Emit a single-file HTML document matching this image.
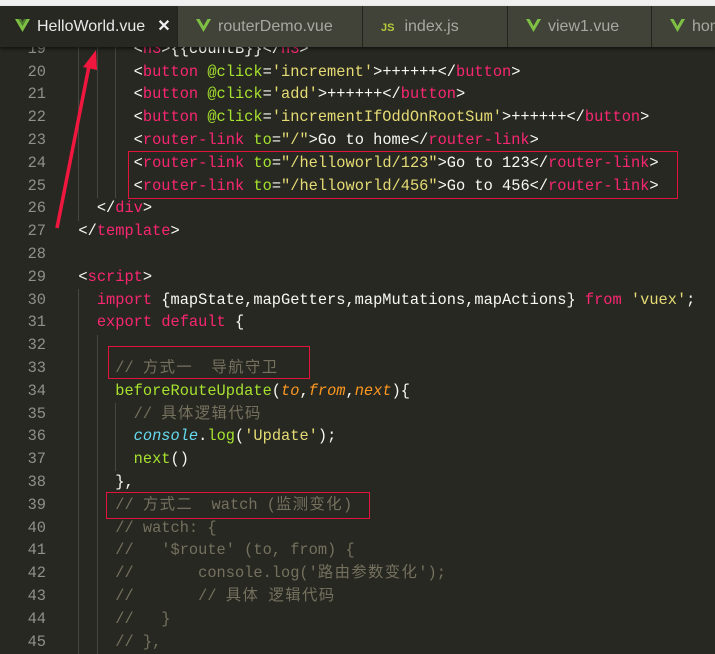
<!DOCTYPE html>
<html><head><meta charset="utf-8"><style>
*{margin:0;padding:0;box-sizing:border-box}
body{width:715px;height:653px;overflow:hidden;background:#272822;position:relative;font-family:"Liberation Mono","Noto Sans CJK SC",monospace;font-size:15.35px;color:#f8f8f2}
.top{position:absolute;left:0;top:0;width:715px;height:6px;background:#f0f0f0}
.tabs{position:absolute;left:0;top:6px;width:715px;height:41px;background:#414339;box-shadow:0 2px 3px rgba(0,0,0,.5);z-index:5}
.tab{position:absolute;top:0;height:41px;border-left:1px solid #23241f;font-family:"Liberation Sans",sans-serif;font-size:16px;color:#a8a8a0;line-height:41px;white-space:nowrap;overflow:hidden}
.tab.act{background:#272822;color:#e8e8e8;border-left:none}
.v{display:inline-block;width:15px;height:13px;vertical-align:-1px;margin-right:7px}
.js{color:#b5c93a;font-weight:bold;font-size:11px;margin-right:10px}
.ln{position:absolute;left:0;width:46px;text-align:right;color:#8f908a;height:22.8px;line-height:22.8px}
.cd{position:absolute;left:60px;white-space:pre;height:22.8px;line-height:22.8px}
.t{color:#f92672}.a{color:#a6e22e}.s{color:#e6db74}.c{color:#75715e}.o{color:#fd971f;font-style:italic}.k{color:#66d9ef;font-style:italic}
.z{letter-spacing:1.4px}
.g{position:absolute;width:1px;background:#464741}
.box{position:absolute;border:1.5px solid #e0143c}
#code{position:absolute;left:0;top:1px;width:715px;height:653px}
</style></head><body>
<div class="top"></div>
<div class="tabs">
<div class="tab act" style="left:0;width:177px;padding-left:15px"><svg class="v" viewBox="0 0 15 13"><path d="M0 0h3.5l4 7 4-7H15L7.5 13z" fill="#7ec043"/><path d="M3.5 0h2.5l1.5 2.6L9 0h2.5L7.5 7z" fill="#4e7d2f"/></svg>HelloWorld.vue<span style="margin-left:12px;color:#f0f0f0;font-weight:bold">✕</span></div>
<div class="tab" style="left:177px;width:185px;padding-left:18px"><svg class="v" viewBox="0 0 15 13"><path d="M0 0h3.5l4 7 4-7H15L7.5 13z" fill="#7ec043"/></svg>routerDemo.vue</div>
<div class="tab" style="left:362px;width:145px;padding-left:18px"><span class="js">JS</span>index.js</div>
<div class="tab" style="left:507px;width:144px;padding-left:18px"><svg class="v" viewBox="0 0 15 13"><path d="M0 0h3.5l4 7 4-7H15L7.5 13z" fill="#7ec043"/></svg>view1.vue</div>
<div class="tab" style="left:651px;width:64px;padding-left:18px"><svg class="v" viewBox="0 0 15 13"><path d="M0 0h3.5l4 7 4-7H15L7.5 13z" fill="#7ec043"/></svg>home</div>
</div>

<div id="code">
<div class="g" style="left:78px;top:37px;height:183px"></div>
<div class="g" style="left:78px;top:288px;height:365px"></div>
<div class="g" style="left:97px;top:37px;height:160px"></div>
<div class="g" style="left:97px;top:334px;height:319px"></div>
<div class="g" style="left:115px;top:37px;height:160px"></div>
<div class="g" style="left:115px;top:402px;height:68px"></div>

<div class="ln" style="top:37px">19</div><div class="cd" style="top:37px">        &lt;<span class="t">h3</span>&gt;{{countB}}&lt;/<span class="t">h3</span>&gt;</div>
<div class="ln" style="top:59.6px">20</div><div class="cd" style="top:59.6px">        &lt;<span class="t">button</span> <span class="a">@click</span>=<span class="s">'increment'</span>&gt;++++++&lt;/<span class="t">button</span>&gt;</div>
<div class="ln" style="top:82.4px">21</div><div class="cd" style="top:82.4px">        &lt;<span class="t">button</span> <span class="a">@click</span>=<span class="s">'add'</span>&gt;++++++&lt;/<span class="t">button</span>&gt;</div>
<div class="ln" style="top:105.2px">22</div><div class="cd" style="top:105.2px">        &lt;<span class="t">button</span> <span class="a">@click</span>=<span class="s">'incrementIfOddOnRootSum'</span>&gt;++++++&lt;/<span class="t">button</span>&gt;</div>
<div class="ln" style="top:128px">23</div><div class="cd" style="top:128px">        &lt;<span class="t">router-link</span> <span class="a">to</span>=<span class="s">"/"</span>&gt;Go to home&lt;/<span class="t">router-link</span>&gt;</div>
<div class="ln" style="top:150.8px">24</div><div class="cd" style="top:150.8px">        &lt;<span class="t">router-link</span> <span class="a">to</span>=<span class="s">"/helloworld/123"</span>&gt;Go to 123&lt;/<span class="t">router-link</span>&gt;</div>
<div class="ln" style="top:173.6px">25</div><div class="cd" style="top:173.6px">        &lt;<span class="t">router-link</span> <span class="a">to</span>=<span class="s">"/helloworld/456"</span>&gt;Go to 456&lt;/<span class="t">router-link</span>&gt;</div>
<div class="ln" style="top:196.4px">26</div><div class="cd" style="top:196.4px">    &lt;/<span class="t">div</span>&gt;</div>
<div class="ln" style="top:219.2px">27</div><div class="cd" style="top:219.2px">  &lt;/<span class="t">template</span>&gt;</div>
<div class="ln" style="top:242px">28</div>
<div class="ln" style="top:264.8px">29</div><div class="cd" style="top:264.8px">  &lt;<span class="t">script</span>&gt;</div>
<div class="ln" style="top:287.6px">30</div><div class="cd" style="top:287.6px">    <span class="t">import</span> {mapState,mapGetters,mapMutations,mapActions} <span class="t">from</span> <span class="s">'vuex'</span>;</div>
<div class="ln" style="top:310.4px">31</div><div class="cd" style="top:310.4px">    <span class="t">export</span> <span class="t">default</span> {</div>
<div class="ln" style="top:333.2px">32</div>
<div class="ln" style="top:356px">33</div><div class="cd c" style="top:356px">      // <span class="z">方式一</span>  <span class="z">导航守卫</span></div>
<div class="ln" style="top:378.8px">34</div><div class="cd" style="top:378.8px">      <span class="a">beforeRouteUpdate</span>(<span class="o">to</span>,<span class="o">from</span>,<span class="o">next</span>){</div>
<div class="ln" style="top:401.6px">35</div><div class="cd c" style="top:401.6px">        // <span class="z">具体逻辑代码</span></div>
<div class="ln" style="top:424.4px">36</div><div class="cd" style="top:424.4px">        <span class="k">console</span>.<span class="a">log</span>(<span class="s">'Update'</span>);</div>
<div class="ln" style="top:447.2px">37</div><div class="cd" style="top:447.2px">        <span class="a">next</span>()</div>
<div class="ln" style="top:470px">38</div><div class="cd" style="top:470px">      },</div>
<div class="ln" style="top:492.8px">39</div><div class="cd c" style="top:492.8px">      // <span class="z">方式二</span>  watch (<span class="z">监测变化</span>)</div>
<div class="ln" style="top:515.6px">40</div><div class="cd c" style="top:515.6px">      // watch: {</div>
<div class="ln" style="top:538.4px">41</div><div class="cd c" style="top:538.4px">      //   '$route' (to, from) {</div>
<div class="ln" style="top:561.2px">42</div><div class="cd c" style="top:561.2px">      //       console.log('<span class="z">路由参数变化</span>');</div>
<div class="ln" style="top:584px">43</div><div class="cd c" style="top:584px">      //       // <span class="z">具体</span> <span class="z">逻辑代码</span></div>
<div class="ln" style="top:606.8px">44</div><div class="cd c" style="top:606.8px">      //   }</div>
<div class="ln" style="top:629.6px">45</div><div class="cd c" style="top:629.6px">      // },</div>
</div>

<div class="box" style="left:128px;top:151px;width:550px;height:48px"></div>
<div class="box" style="left:108px;top:346px;width:202px;height:33px"></div>
<div class="box" style="left:106px;top:492px;width:264px;height:27px"></div>

<svg style="position:absolute;left:0;top:0;z-index:6" width="715" height="653"><path d="M57 228 L89 66" stroke="#f0173f" stroke-width="3.5" fill="none"/><path d="M96 50 L83 67 L97 70 Z" fill="#f0173f"/></svg>
</body></html>
